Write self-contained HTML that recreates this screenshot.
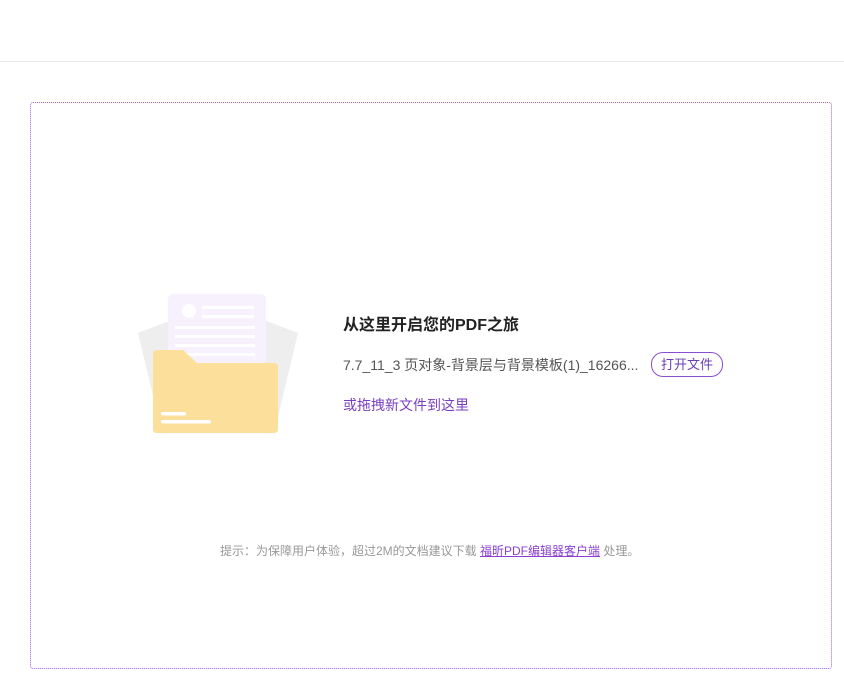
<!DOCTYPE html>
<html><head><meta charset="utf-8"><style>
body{margin:0;width:844px;height:694px;background:#fff;font-family:"Liberation Sans","Noto Sans CJK SC",sans-serif;position:relative;overflow:hidden}
.hr{position:absolute;left:0;top:61px;width:844px;height:1px;background:#e8e8e8}
.box{position:absolute;left:30px;top:102px;width:800px;height:565px;border:1px dotted #a35ce0;border-radius:3px}
.t{position:absolute;left:343px;top:311px;font-size:16px;font-weight:bold;color:#222}
.f{position:absolute;left:343px;top:355px;font-size:14px;color:#555}
.btn{position:absolute;left:651px;top:352px;width:70px;height:23px;border:1px solid #8a4fd0;border-radius:12px;font-size:13px;color:#6a3fb0;text-align:center;line-height:23px}
.d{position:absolute;left:343px;top:395px;font-size:14px;color:#7a3fc0}
.tip{position:absolute;left:220px;top:542px;font-size:12px;color:#999}
.tip a{color:#8a3fd0;text-decoration:underline}
</style></head><body>
<div class="hr"></div>
<div class="box"></div>
<svg style="position:absolute;left:130px;top:285px" width="180" height="160">
<path d="M8 48 L50 32 L50 140 L30 140 Z" fill="#eeeeee"/>
<path d="M168 48 L126 32 L126 140 L146 140 Z" fill="#eeeeee"/>
<rect x="38" y="9" width="98" height="120" rx="5" fill="#f6f1fc"/>
<circle cx="59" cy="26" r="7" fill="#fff"/>
<rect x="72" y="21" width="52" height="3" fill="#fff"/><rect x="72" y="30" width="52" height="3" fill="#fff"/>
<rect x="45" y="41" width="80" height="3" fill="#fff"/><rect x="45" y="50" width="80" height="3" fill="#fff"/><rect x="45" y="59" width="80" height="3" fill="#fff"/><rect x="45" y="68" width="80" height="3" fill="#fff"/>
<path d="M27 65 Q23 65 23 69 L23 144 Q23 148 27 148 L144 148 Q148 148 148 144 L148 82 Q148 78 144 78 L67 78 L53 65 Z" fill="#fbdf9b"/>
<rect x="31" y="127" width="25" height="3.5" rx="1.5" fill="#fff"/><rect x="31" y="135" width="50" height="3.5" rx="1.5" fill="#fff"/>
</svg>
<div class="t">从这里开启您的PDF之旅</div>
<div class="f">7.7_11_3 页对象-背景层与背景模板(1)_16266...</div>
<div class="btn">打开文件</div>
<div class="d">或拖拽新文件到这里</div>
<div class="tip">提示：为保障用户体验，超过2M的文档建议下载 <a>福昕PDF编辑器客户端</a> 处理。</div>
</body></html>
